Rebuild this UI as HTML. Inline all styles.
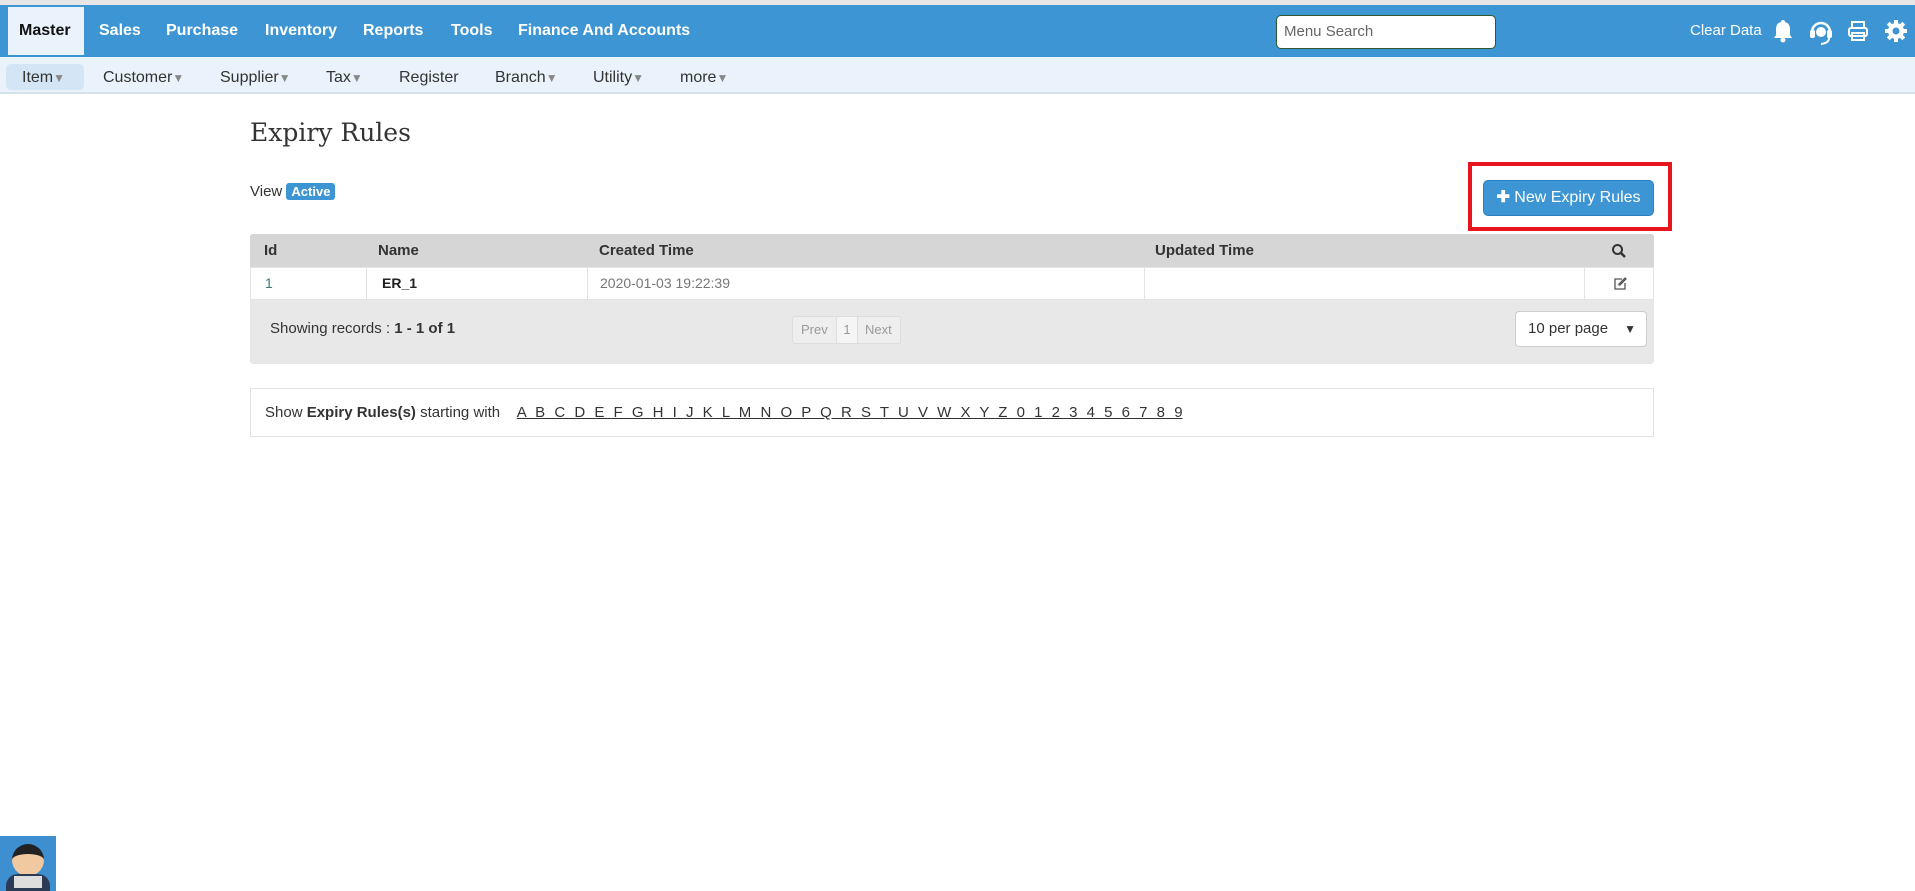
<!DOCTYPE html>
<html><head><meta charset="utf-8"><style>
*{box-sizing:border-box;margin:0;padding:0}
body{width:1915px;height:891px;position:relative;background:#fff;font-family:"Liberation Sans",Arial,sans-serif;overflow:hidden;color:#333}
.a{position:absolute}
.top{left:0;top:0;width:1915px;height:57px;background:#3d95d4;border-top:5px solid #e6e6e6}
.nav{top:0;height:52px;line-height:52px;color:#fff;font-weight:bold;font-size:16px}
.sub{left:0;top:57px;width:1915px;height:37px;background:#eaf3fb;border-bottom:2px solid #d5e2ec}
.si{top:59px;height:37px;line-height:37px;font-size:16px;color:#333}
.car{color:#888;font-size:12px}
</style></head><body>
<div class="a top">
<div class="a" style="left:8px;top:2px;width:76px;height:48px;background:#eaf3fb"></div>
<div class="a nav" style="left:19px;color:#111">Master</div>
<div class="a nav" style="left:99px">Sales</div>
<div class="a nav" style="left:166px">Purchase</div>
<div class="a nav" style="left:265px">Inventory</div>
<div class="a nav" style="left:363px">Reports</div>
<div class="a nav" style="left:451px">Tools</div>
<div class="a nav" style="left:518px">Finance And Accounts</div>
<div class="a" style="left:1276px;top:10px;width:220px;height:34px;background:#fff;border:1px solid #2d5a2d;border-radius:5px;font-size:15px;color:#666;line-height:32px;padding-left:7px">Menu Search</div>
<div class="a" style="left:1690px;top:0;line-height:52px;color:#fff;font-size:15px">Clear Data</div>
<svg class="a" style="left:1773px;top:14px" width="20" height="24" viewBox="0 0 20 24"><path d="M10 1a2 2 0 0 1 2 2c4 1 5 4 5 8v5l2 3H1l2-3v-5c0-4 1-7 5-8a2 2 0 0 1 2-2z" fill="#fff"/><circle cx="10" cy="21" r="2.5" fill="#fff"/></svg>
<svg class="a" style="left:1809px;top:13px" width="24" height="28" viewBox="0 0 24 28"><path d="M3 14a9 9 0 0 1 18 0" fill="none" stroke="#fff" stroke-width="2.5"/><rect x="1" y="12" width="5" height="8" rx="2" fill="#fff"/><rect x="18" y="12" width="5" height="8" rx="2" fill="#fff"/><circle cx="12" cy="14" r="5" fill="#fff"/><path d="M20 20q0 5-8 6" fill="none" stroke="#fff" stroke-width="2"/></svg>
<svg class="a" style="left:1847px;top:15px" width="22" height="22" viewBox="0 0 22 22" fill="none" stroke="#fff" stroke-width="2"><rect x="5" y="2" width="12" height="6"/><rect x="2" y="8" width="18" height="8" rx="2"/><rect x="5" y="13" width="12" height="7"/></svg>
<svg class="a" style="left:1884px;top:14px" width="24" height="24" viewBox="0 0 24 24"><g fill="#fff"><circle cx="12" cy="12" r="8"/><rect x="10" y="1" width="4" height="22"/><rect x="1" y="10" width="22" height="4"/><rect x="10" y="1" width="4" height="22" transform="rotate(45 12 12)"/><rect x="10" y="1" width="4" height="22" transform="rotate(-45 12 12)"/></g><circle cx="12" cy="12" r="3.5" fill="#3d95d4"/></svg>
</div>
<div class="a sub"></div>
<div class="a" style="left:6px;top:64px;width:78px;height:26px;background:#d4e6f6;border-radius:5px"></div>
<div class="a si" style="left:22px">Item<span class="car">▼</span></div>
<div class="a si" style="left:103px">Customer<span class="car">▼</span></div>
<div class="a si" style="left:220px">Supplier<span class="car">▼</span></div>
<div class="a si" style="left:326px">Tax<span class="car">▼</span></div>
<div class="a si" style="left:399px">Register</div>
<div class="a si" style="left:495px">Branch<span class="car">▼</span></div>
<div class="a si" style="left:593px">Utility<span class="car">▼</span></div>
<div class="a si" style="left:680px">more<span class="car">▼</span></div>

<div class="a" style="left:250px;top:118px;font-family:'DejaVu Serif',serif;font-size:25px;color:#333">Expiry Rules</div>
<div class="a" style="left:250px;top:183px;font-size:15px;line-height:18px">View <span style="background:#3d95d4;color:#fff;font-weight:bold;font-size:13px;padding:1px 5px;border-radius:3px">Active</span></div>
<div class="a" style="left:1468px;top:162px;width:204px;height:69px;border:4px solid #e8141e"></div>
<div class="a" style="left:1483px;top:180px;width:171px;height:36px;background:#3d95d4;border:1px solid #2f7fbe;border-radius:5px;color:#fff;font-size:16px;line-height:34px;text-align:center"><b>✚</b> New Expiry Rules</div>

<div class="a" style="left:250px;top:234px;width:1404px;height:130px;background:#e8e8e8;border-radius:3px"></div>
<div class="a" style="left:250px;top:234px;width:1404px;height:33px;background:#d6d6d6;border-radius:3px 3px 0 0;font-weight:bold;font-size:15px;line-height:33px">
<span class="a" style="left:14px">Id</span><span class="a" style="left:128px">Name</span><span class="a" style="left:349px">Created Time</span><span class="a" style="left:905px">Updated Time</span>
<svg class="a" style="left:1361px;top:9px" width="16" height="16" viewBox="0 0 16 16"><circle cx="6.5" cy="6.5" r="4.5" fill="none" stroke="#333" stroke-width="2"/><path d="M10 10l4 4" stroke="#333" stroke-width="2.5"/></svg></div>
<div class="a" style="left:250px;top:267px;width:1404px;height:33px;background:#fff;border:1px solid #e3e3e3;font-size:14px;line-height:31px">
<span class="a" style="left:14px;color:#3a7a7a">1</span>
<span class="a" style="left:115px;top:0;height:31px;border-left:1px solid #e3e3e3;padding-left:15px;font-weight:bold;color:#222">ER_1</span>
<span class="a" style="left:336px;top:0;height:31px;border-left:1px solid #e3e3e3;padding-left:12px;color:#777">2020-01-03 19:22:39</span>
<span class="a" style="left:893px;top:0;height:31px;border-left:1px solid #e3e3e3"></span>
<span class="a" style="left:1333px;top:0;height:31px;border-left:1px solid #e3e3e3"></span>
<svg class="a" style="left:1362px;top:9px" width="14" height="14" viewBox="0 0 14 14" fill="none" stroke="#555" stroke-width="1.3"><path d="M9 2H2v10h10V6"/><path d="M6 8l1 0 6-6-1-1-6 6z"/></svg></div>
<div class="a" style="left:270px;top:319px;font-size:15px;line-height:20px">Showing records : <b>1 - 1 of 1</b></div>
<div class="a" style="left:792px;top:316px;width:109px;height:28px;border:1px solid #ddd;border-radius:3px;background:#eee;font-size:13px;line-height:26px;color:#999">
<span class="a" style="left:8px">Prev</span><span class="a" style="left:43px;width:22px;text-align:center;background:#f5f5f5;border-left:1px solid #ddd;border-right:1px solid #ddd">1</span><span class="a" style="left:72px">Next</span></div>
<div class="a" style="left:1515px;top:311px;width:132px;height:36px;background:#fff;border:1px solid #ccc;border-radius:4px;font-size:15px;line-height:34px;padding-left:12px">10 per page<span class="a" style="right:10px;font-size:12px">▼</span></div>

<div class="a" style="left:250px;top:388px;width:1404px;height:49px;border:1px solid #e3e3e3;font-size:15px;line-height:47px;padding-left:14px">Show <b>Expiry Rules(s)</b> starting with &nbsp;&nbsp;&nbsp;<span style="text-decoration:underline;color:#333;word-spacing:5px">A B C D E F G H I J K L M N O P Q R S T U V W X Y Z 0 1 2 3 4 5 6 7 8 9</span></div>

<div class="a" style="left:0;top:836px;width:56px;height:55px;background:#3d8fd0;overflow:hidden">
<div class="a" style="left:12px;top:8px;width:32px;height:32px;border-radius:50%;background:#f1c9a0;border-top:10px solid #222"></div>
<div class="a" style="left:6px;top:38px;width:44px;height:20px;background:#2b3a55;border-radius:12px 12px 0 0"></div>
<div class="a" style="left:14px;top:40px;width:28px;height:12px;background:#ddd"></div>
</div>
</body></html>
